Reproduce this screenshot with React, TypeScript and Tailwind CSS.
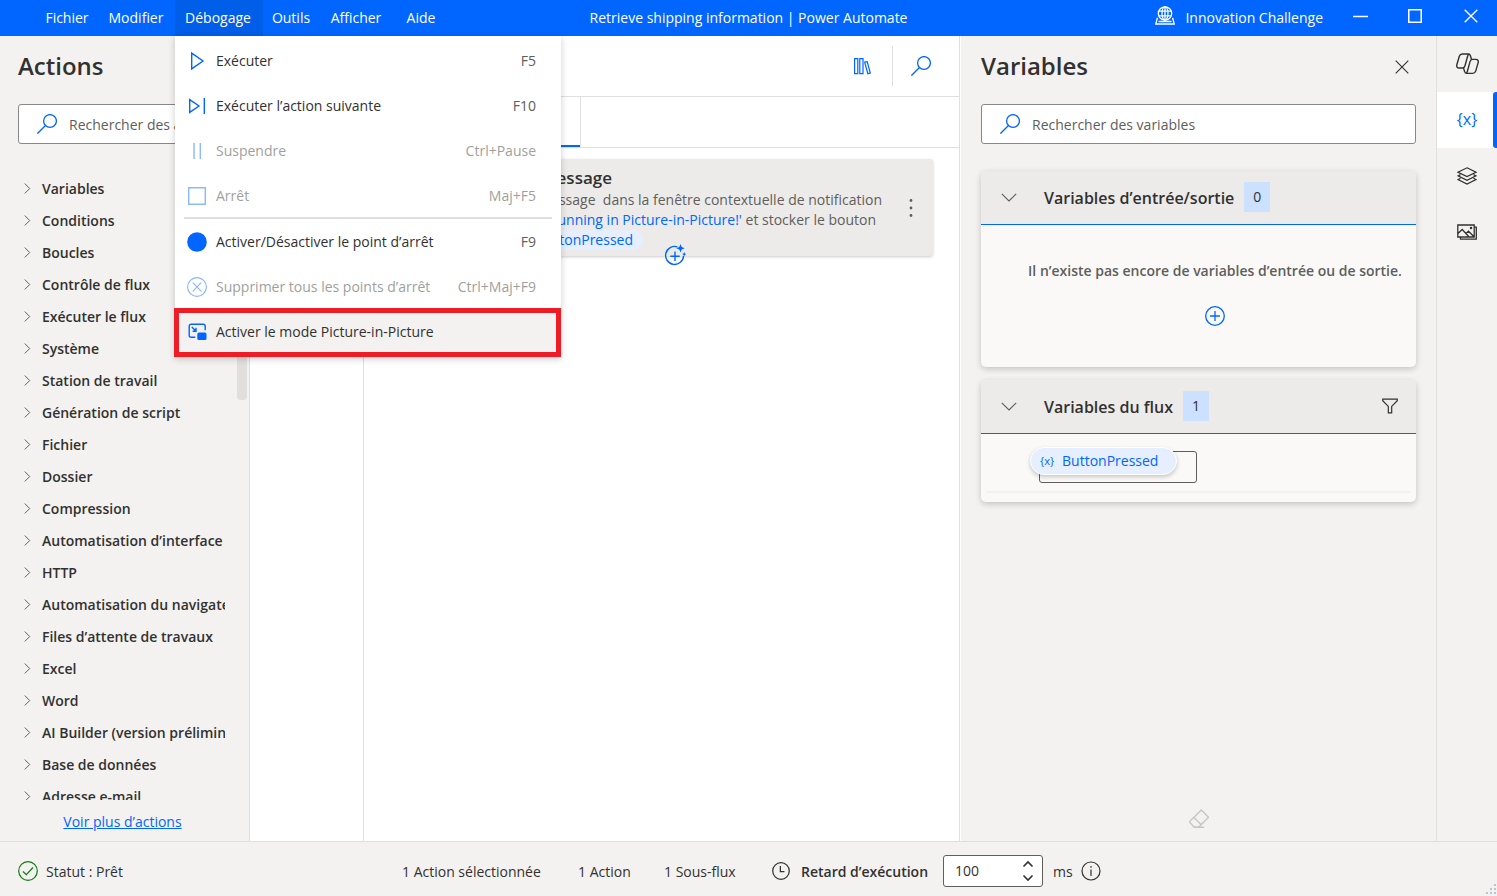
import React from 'react';

const menuBar = [
  { label: 'Fichier', className: 'w-[62px]' },
  { label: 'Modifier', className: 'w-[76px]' },
  { label: 'Débogage', className: 'w-[88px] bg-[#005ee8]' },
  { label: 'Outils', className: 'w-[58px]' },
  { label: 'Afficher', className: 'w-[72px]' },
  { label: 'Aide', className: 'w-[58px]' },
];

const actionGroups = [
  'Variables',
  'Conditions',
  'Boucles',
  'Contrôle de flux',
  'Exécuter le flux',
  'Système',
  'Station de travail',
  'Génération de script',
  'Fichier',
  'Dossier',
  'Compression',
  'Automatisation d’interface utilisateur',
  'HTTP',
  'Automatisation du navigateur',
  'Files d’attente de travaux',
  'Excel',
  'Word',
  'AI Builder (version préliminaire)',
  'Base de données',
  'Adresse e-mail',
];

const Svg = ({ size = 20, sw = 1.2, className = '', children }: any) => (
  <svg
    width={size}
    height={size}
    viewBox="0 0 20 20"
    fill="none"
    stroke="currentColor"
    strokeWidth={sw}
    className={`shrink-0 ${className}`}
    aria-hidden="true"
  >
    {children}
  </svg>
);

const SearchIcon = () => (
  <Svg sw={1.3} className="text-[#0066ff]">
    <circle cx="13" cy="7" r="6.4" />
    <path d="M8.5 11.5L0.4 19.6" />
  </Svg>
);

const ChevronDown = () => (
  <Svg size={16} sw={1.4} className="text-[#605e5c]">
    <path d="M1 6l9 9 9-9" />
  </Svg>
);

const CloseIcon = ({ size, sw }: any) => (
  <Svg size={size} sw={sw}>
    <path d="M1 1l18 18M19 1L1 19" />
  </Svg>
);

const PlayIcon = () => (
  <Svg sw={1.4}>
    <path d="M4.7 2.2v15.6L16 10z" />
  </Svg>
);

const StepIcon = () => (
  <Svg sw={1.4}>
    <path d="M2.7 3.6v12.8L12 10zM17.3 2v16" />
  </Svg>
);

const PauseIcon = () => (
  <Svg sw={1.4}>
    <path d="M7 2v16M13.3 2v16" />
  </Svg>
);

const StopIcon = () => (
  <Svg sw={1.4}>
    <path d="M1.7 1.7h16.6v16.6H1.7z" />
  </Svg>
);

const DotIcon = () => (
  <Svg>
    <circle cx="10" cy="10" r="9.8" fill="currentColor" stroke="none" />
  </Svg>
);

const ClearIcon = () => (
  <Svg>
    <circle cx="10" cy="10" r="9.4" />
    <path d="M5.7 5.7l8.6 8.6M14.3 5.7l-8.6 8.6" />
  </Svg>
);

const PipIcon = () => (
  <Svg sw={1.4}>
    <path d="M8.3 15.3H4.2a2 2 0 01-2-2V4.2a2 2 0 012-2h12a2 2 0 012 2v4.1" />
    <path d="M4.8 5l4 4M9 5.8v3.4H5.6" />
    <rect x="10.3" y="10.5" width="9.2" height="7.5" rx="1.5" fill="currentColor" stroke="none" />
  </Svg>
);

const debugMenu = [
  { label: 'Exécuter', keys: 'F5', icon: PlayIcon },
  { label: 'Exécuter l’action suivante', keys: 'F10', icon: StepIcon },
  { label: 'Suspendre', keys: 'Ctrl+Pause', icon: PauseIcon, disabled: true },
  { label: 'Arrêt', keys: 'Maj+F5', icon: StopIcon, disabled: true, divider: true },
  { label: 'Activer/Désactiver le point d’arrêt', keys: 'F9', icon: DotIcon },
  { label: 'Supprimer tous les points d’arrêt', keys: 'Ctrl+Maj+F9', icon: ClearIcon, disabled: true },
  { label: 'Activer le mode Picture-in-Picture', keys: '', icon: PipIcon, active: true },
];

const DebugMenu = () => (
  <div role="menu" className="absolute top-9 left-0 z-20 w-[386px] bg-white pt-0.5 pb-[3px] text-[#323130] shadow-[0_2px_7px_rgba(0,0,0,0.2)]">
    {debugMenu.map(({ label, keys, icon: Icon, disabled, divider, active }) => (
      <React.Fragment key={label}>
        <button
          role="menuitem"
          disabled={disabled}
          className={`relative flex h-[45px] w-full items-center pr-[25px] pl-3 text-left ${disabled ? 'text-[#a19f9d]' : ''} ${active ? 'bg-[#f3f2f1]' : ''}`}
        >
          <span className={disabled ? 'text-[#8cb8ff]' : 'text-[#0066ff]'}>
            <Icon />
          </span>
          <span className="ml-[9px] flex-1 whitespace-nowrap">{label}</span>
          <span className={disabled ? '' : 'text-[#605e5c]'}>{keys}</span>
          {active && <span className="absolute -top-px right-0 -bottom-[3px] -left-px border-[5px] border-[#ee1c24]" />}
        </button>
        {divider && <div className="mx-[9px] -mt-px h-0.5 bg-[#e1dfdd]" />}
      </React.Fragment>
    ))}
  </div>
);

const TitleBar = () => (
  <header className="relative flex h-9 shrink-0 items-center bg-[#0066ff] text-white">
    <nav className="flex h-full flex-1">
      {menuBar.map((item) => (
        <div key={item.label} className="relative first:ml-[37px]">
          <button className={`h-full pr-0.5 text-center ${item.className}`}>{item.label}</button>
          {item.label === 'Débogage' && <DebugMenu />}
        </div>
      ))}
    </nav>
    <h1>Retrieve shipping information | Power Automate</h1>
    <div className="flex h-full flex-1 items-center justify-end">
      <button className="mr-[30px] flex items-center gap-[10px] whitespace-nowrap">
        <Svg sw={1.3} className="mb-1">
          <circle cx="10" cy="7.5" r="6.7" />
          <ellipse cx="10" cy="7.5" rx="3" ry="6.7" />
          <path d="M3.800 5.200h12.400M3.800 9.900h12.400M10 0.800v13.400" />
          <path d="M3 12.500H2.200L0.800 18h18.400l-1.400-5.500H17M3.500 15.500h13" />
        </Svg>
        Innovation Challenge
      </button>
      <button aria-label="Réduire" className="mr-10 pb-1">
        <Svg size={15} sw={2}>
          <path d="M0 10h20" />
        </Svg>
      </button>
      <button aria-label="Agrandir" className="mr-[42px] pb-1">
        <Svg size={14} sw={2.2}>
          <path d="M1.100 1.100h17.800v17.800H1.100z" />
        </Svg>
      </button>
      <button aria-label="Fermer" className="mr-[19px] pb-1">
        <CloseIcon size={14} sw={2} />
      </button>
    </div>
  </header>
);

const SearchBox = ({ id, label }: { id: string; label: string }) => (
  <label htmlFor={id} className="flex h-10 items-center gap-3 rounded-[3px] border border-[#8a8886] bg-white pl-[18px]">
    <SearchIcon />
    <input id={id} type="search" placeholder={label} aria-label={label} className="w-full min-w-0 bg-transparent pt-0.5 outline-none placeholder:text-[#605e5c]" />
  </label>
);

const ActionsPanel = () => (
  <aside className="flex w-[250px] shrink-0 flex-col border-r border-[#e1dfdd] bg-[#f3f2f1]">
    <h2 className="pt-[13px] pl-[18px] text-2xl leading-[34px] font-semibold">Actions</h2>
    <div className="mt-[21px] mr-5 ml-[18px]">
      <SearchBox id="search-actions" label="Rechercher des actions" />
    </div>
    <div className="mt-7 flex min-h-0 flex-1">
      <ul className="w-[225px] overflow-hidden">
        {actionGroups.map((name) => (
          <li key={name}>
            <button className="flex h-8 items-center gap-[9px] pl-[22px] font-semibold whitespace-nowrap">
              <Svg size={11} sw={1.8} className="text-[#605e5c]">
                <path d="M5 1l9 9-9 9" />
              </Svg>
              <span className="pt-0.5">{name}</span>
            </button>
          </li>
        ))}
      </ul>
      <div className="ml-3 h-[228px] w-[10px] rounded-[4px] bg-[#e1dfdd]" />
    </div>
    <div className="flex h-[41px] items-center justify-center pt-0.5 pr-1">
      <a href="#" className="text-[#0066ff] underline">
        Voir plus d’actions
      </a>
    </div>
  </aside>
);

const Designer = () => (
  <main className="flex min-w-0 flex-1 flex-col border-r border-[#e1dfdd] bg-white">
    <div className="flex h-[61px] shrink-0 items-center justify-end border-b border-[#e1dfdd]">
      <button aria-label="Bibliothèque" className="mr-5 text-[#0066ff]">
        <Svg>
          <path d="M2.600 2.600h3.200v15H2.600zM7.800 2.600H11v15H7.800zM12.700 6.200l2.500-.6 3.100 11.400-2.500.7z" />
        </Svg>
      </button>
      <div className="h-10 w-px bg-[#e1dfdd]" />
      <button aria-label="Rechercher" className="mr-7 ml-[18px]">
        <SearchIcon />
      </button>
    </div>
    <div className="flex h-[51px] shrink-0 border-b border-[#e1dfdd]">
      <div className="w-[331px] border-r border-[#e1dfdd]">
        <button aria-label="Main" className="h-full w-full border-b-2 border-[#0066ff]" />
      </div>
    </div>
    <div className="flex flex-1">
      <div className="w-[114px] shrink-0 border-r border-[#e1dfdd]" />
      <div className="min-w-0 flex-1 pt-[11px] pr-[26px] pl-4">
        <section className="relative flex items-center justify-between rounded-[3px] bg-[#edebe9] leading-5 text-[#605e5c] shadow-[0_1px_3px_rgba(0,0,0,0.2)]">
          <div className="pt-[7px] pb-[6px] whitespace-pre">
            <h3 className="w-[232px] text-right text-[17px] leading-6 font-semibold text-[#323130]">Afficher le message</h3>
            <p className="w-[502px] text-right">Afficher le message{'  '}dans la fenêtre contextuelle de notification</p>
            <p className="w-[496px] text-right">
              avec le texte <span className="text-[#0066ff]">'Running in Picture-in-Picture!'</span> et stocker le bouton
            </p>
            <p className="flex w-[263px] justify-end">
              <span className="rounded-full bg-[#e5efff] px-[10px] text-[#0066ff]">ButtonPressed</span>
            </p>
          </div>
          <button aria-label="Autres options" className="mr-3 text-[#605e5c]">
            <Svg>
              <circle cx="10" cy="2.5" r="1.4" fill="currentColor" stroke="none" />
              <circle cx="10" cy="10" r="1.4" fill="currentColor" stroke="none" />
              <circle cx="10" cy="17.5" r="1.4" fill="currentColor" stroke="none" />
            </Svg>
          </button>
          <button aria-label="Ajouter une action" className="absolute -bottom-[10px] left-[284px] text-[#0066ff]">
            <svg width="22" height="22" viewBox="0 0 22 22" fill="none" stroke="currentColor" strokeWidth="1.4" aria-hidden="true">
              <path d="M13.500 2.900A9 9 0 1 0 19.600 11.800M11 7.500v9.400M6.300 12.200h9.400" />
              <path d="M16.500 0l1.200 3 3 1.200-3 1.200-1.200 3-1.200-3-3-1.200 3-1.200z" fill="currentColor" stroke="none" />
              <path d="M20.200 8l.7 1.500 1.300.6-1.300.6-.7 1.500-.7-1.500-1.300-.6 1.300-.6z" fill="currentColor" stroke="none" />
            </svg>
          </button>
        </section>
      </div>
    </div>
  </main>
);

const CardHeader = ({ title, count, children }: any) => (
  <div className="flex h-[54px] items-center border-b border-[#0066ff] bg-[#edebe9] pr-[18px] pb-0.5 pl-5">
    <button aria-label={`Réduire ${title}`}>
      <ChevronDown />
    </button>
    <h3 className="ml-[27px] pt-[3px] text-base font-semibold">{title}</h3>
    <span className="ml-[10px] flex h-[30px] items-center bg-[#cce0ff] px-[9px] font-medium">{count}</span>
    <div className="ml-auto flex">{children}</div>
  </div>
);

const VariablesPanel = () => (
  <aside className="ml-px flex w-[476px] shrink-0 flex-col border-r border-[#e1dfdd] bg-[#f3f2f1] px-5">
    <div className="flex items-start justify-between pt-[13px]">
      <h2 className="text-2xl leading-[34px] font-semibold">Variables</h2>
      <button aria-label="Fermer le volet" className="mt-[11px] mr-[7px]">
        <CloseIcon size={14} sw={1.6} />
      </button>
    </div>
    <div className="mt-[21px]">
      <SearchBox id="search-variables" label="Rechercher des variables" />
    </div>

    <section className="mt-[27px] overflow-hidden rounded-[5px] bg-[#faf9f8] shadow-[0_2px_6px_rgba(0,0,0,0.2)]">
      <CardHeader title="Variables d’entrée/sortie" count={0} />
      <div className="flex h-[142px] flex-col items-center pt-[35px]">
        <p className="ml-[33px] text-sm leading-[22px] font-semibold text-[#605e5c]">Il n’existe pas encore de variables d’entrée ou de sortie.</p>
        <button aria-label="Ajouter une variable" className="mt-6 ml-[33px] text-[#0066ff]">
          <Svg sw={1.3}>
            <circle cx="10" cy="10" r="9.3" />
            <path d="M10 5v10M5 10h10" />
          </Svg>
        </button>
      </div>
    </section>

    <section className="mt-[13px] overflow-hidden rounded-[5px] bg-[#faf9f8] shadow-[0_2px_6px_rgba(0,0,0,0.2)]">
      <CardHeader title="Variables du flux" count={1}>
        <button aria-label="Filtrer">
          <Svg size={16} sw={1.5}>
            <path d="M0.900 1.500h18.200v1.800l-7 7.200v8H7.900v-8l-7-7.200z" />
          </Svg>
        </button>
      </CardHeader>
      <div className="px-[5px] pt-[17px] pb-[9px]">
        <div className="relative h-[42px] border-b-2 border-[#f3f2f1]">
          <input aria-label="Valeur de ButtonPressed" className="ml-[53px] h-8 w-[158px] rounded-[3px] border border-[#605e5c] bg-transparent outline-none" />
          <div className="absolute -top-1 left-11 flex h-7 w-[147px] items-center gap-2 rounded-full border border-white bg-[#e5efff] pl-[9px] text-[#0066ff] shadow-[0_2px_4px_rgba(0,0,0,0.2)]">
            <span className="text-[11px]">{'{x}'}</span>
            ButtonPressed
          </div>
        </div>
      </div>
    </section>

    <button aria-label="Effacer les valeurs" disabled className="mt-auto mb-3 self-center text-[#c8c6c4]">
      <Svg sw={1.4}>
        <path d="M12.300 1l7.200 7.200-9.800 9.800H5L0.800 13.300v-1zM5 8.500l7.200 7.200M4.500 18.300h10.700" />
      </Svg>
    </button>
  </aside>
);

const copilotLobe =
  'M15.500 6.500L14.400 2.800C14 1.600 13.600 1 12.400 1H6.200C4.800 1 3.800 1.800 3.300 3.300L0.900 11.500C0.300 13.600 1.200 15 3 15h3.600c1.400 0 2-.8 2.400-2.200L11.600 3.200C12 1.700 12.400 1.100 13.300 1.100';

const Rail = () => (
  <nav className="flex w-[60px] shrink-0 flex-col bg-[#f3f2f1]">
    <button aria-label="Copilot" className="flex h-14 items-center justify-center">
      <svg width="23" height="22" viewBox="0 0 23 22" fill="none" stroke="currentColor" strokeWidth="1.400" strokeLinejoin="round" aria-hidden="true">
        <path d={copilotLobe} />
        <path d={copilotLobe} transform="rotate(180 11.5 10.7)" />
      </svg>
    </button>
    <button aria-label="Variables" className="flex h-14 items-center bg-white text-base text-[#0066ff]">
      <span className="flex-1 pb-0.5 pl-1">{'{x}'}</span>
      <span className="h-full w-1 rounded-l-[3px] bg-[#0066ff]" />
    </button>
    <button aria-label="Éléments d’interface" className="flex h-14 items-center justify-center">
      <Svg>
        <path d="M10 1.800l9 4.400-9 4.400-9-4.400zM3.500 8.600L1 9.900l9 4.400 9-4.400-2.500-1.300M3.500 12.300L1 13.600 10 18l9-4.400-2.500-1.300" />
      </Svg>
    </button>
    <button aria-label="Images" className="flex h-14 items-center justify-center">
      <Svg sw={1.3}>
        <path d="M0.800 3h16.400v12H0.800zM17.500 5.200h1.800v12H3.500v-2M1 11.500l4.200-4 6.500 7M9 11.500l2.500-2.300 5.500 5.500" />
        <circle cx="14" cy="6" r="0.600" />
      </Svg>
    </button>
  </nav>
);

const StatusBar = () => (
  <footer className="relative flex h-[55px] shrink-0 items-center border-t border-[#e1dfdd] bg-[#f3f2f1] pt-1 whitespace-nowrap">
    <div className="flex w-[402px] items-center gap-2 pl-[18px]">
      <Svg className="text-[#107c10]">
        <circle cx="10" cy="10" r="9.3" />
        <path d="M5 10.500l3.300 3.200L15 6.500" />
      </Svg>
      <span className="pt-0.5">Statut : Prêt</span>
    </div>
    <span className="w-44 pt-0.5">1 Action sélectionnée</span>
    <span className="w-[86px] pt-0.5">1 Action</span>
    <span className="w-[108px] pt-0.5">1 Sous-flux</span>
    <label htmlFor="delay" className="flex w-[171px] items-center gap-[11px] font-semibold">
      <Svg size={18} sw={1.4}>
        <circle cx="10" cy="10" r="9.2" />
        <path d="M9.300 4.500v6.300h4.500" />
      </Svg>
      <span className="pt-0.5">Retard d’exécution</span>
    </label>
    <div className="flex h-8 w-[100px] items-center rounded-[3px] border border-[#605e5c] bg-white pr-2 pl-[11px]">
      <input id="delay" type="number" defaultValue={100} className="w-full min-w-0 [appearance:textfield] outline-none [&::-webkit-inner-spin-button]:appearance-none" />
      <div className="flex flex-col gap-[6px]">
        <button aria-label="Augmenter">
          <svg width="12" height="8" viewBox="0 0 12 8" fill="none" stroke="currentColor" strokeWidth="1.600" aria-hidden="true" className="block">
            <path d="M1.500 6.500L6 2l4.500 4.500" />
          </svg>
        </button>
        <button aria-label="Diminuer">
          <svg width="12" height="8" viewBox="0 0 12 8" fill="none" stroke="currentColor" strokeWidth="1.600" aria-hidden="true" className="block">
            <path d="M1.500 1.500L6 6l4.500-4.500" />
          </svg>
        </button>
      </div>
    </div>
    <span className="mr-2 ml-[10px] pt-0.5">ms</span>
    <button aria-label="Informations">
      <Svg>
        <circle cx="10" cy="10" r="9" />
        <path d="M10 8.500V15M10 5v1.800" />
      </Svg>
    </button>
    <svg width="12" height="12" viewBox="0 0 12 12" fill="#b8c4d4" aria-hidden="true" className="absolute right-0 bottom-0">
      <path d="M9 0h2v2H9zM5 4h2v2H5zM9 4h2v2H9zM1 8h2v2H1zM5 8h2v2H5zM9 8h2v2H9z" />
    </svg>
  </footer>
);

export default function App() {
  return (
    <div className="flex h-screen flex-col overflow-hidden bg-white font-['Open_Sans',sans-serif] text-sm text-[#323130]">
      <TitleBar />
      <div className="flex min-h-0 flex-1">
        <ActionsPanel />
        <Designer />
        <VariablesPanel />
        <Rail />
      </div>
      <StatusBar />
    </div>
  );
}
